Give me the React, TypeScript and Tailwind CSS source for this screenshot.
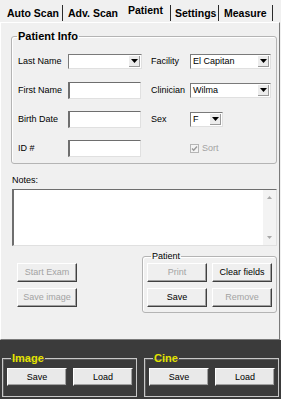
import React from 'react'

const tabs = [
  { label: 'Auto Scan', w: 'w-[61px]', pl: 'pl-[5px]', sep: true },
  { label: 'Adv. Scan', w: 'w-[59px]', pl: 'pl-[5px]', sep: false },
  { label: 'Patient', w: 'w-[49px]', pl: 'pl-[6px]', sep: true, active: true },
  { label: 'Settings', w: 'w-[48px]', pl: 'pl-[4px]', sep: true },
  { label: 'Measure', w: 'w-[54px]', pl: 'pl-[5px]', sep: true },
]

function Arrow() {
  return (
    <svg width="7" height="4" viewBox="0 0 7 4">
      <path d="M0 0h7L3.5 4z" fill="#000" />
    </svg>
  )
}

function Combo({ value, w }: { value?: string; w: string }) {
  return (
    <div className={`${w} h-[15px] flex bg-white border border-t-[#7a7a7a] border-l-[#7a7a7a] border-r-[#e0e0e0] border-b-[#e0e0e0]`}>
      <span className="flex-1 pl-[2px] text-[9px] leading-[13px] text-black">{value}</span>
      <span className="w-[11px] my-[1px] mr-[1px] bg-[#ececec] border-r border-b border-[#9a9a9a] flex items-center justify-center">
        <Arrow />
      </span>
    </div>
  )
}

function TextBox() {
  return (
    <div className="w-[73px] h-[17px] bg-white border border-t-[#6e6e6e] border-l-[#6e6e6e] border-l-2 border-r-[#e0e0e0] border-b-[#e0e0e0]" />
  )
}

function Btn({ label, disabled, dark }: { label: string; disabled?: boolean; dark?: boolean }) {
  return (
    <div
      className={`w-[60px] ${dark ? 'h-[18px] bg-[#e9e9e9]' : 'h-[19px] bg-[#efefef]'} flex items-center justify-center border border-t-white border-l-white border-r-[#404040] border-b-[#404040] shadow-[inset_-1px_-1px_0_#a0a0a0] text-[9px] leading-none ${disabled ? 'text-[#a3a3a3]' : 'text-black'}`}
    >
      {label}
    </div>
  )
}

export default function App() {
  return (
    <div className="w-[281px] h-[399px] bg-[#f0f0f0] flex flex-col font-['Liberation_Sans',Arial,sans-serif] text-black overflow-hidden">
      {/* Tabs */}
      <div className="h-[22px] flex pl-[2px]">
        {tabs.map((t) => (
          <div
            key={t.label}
            className={`${t.w} ${t.pl} shrink-0 h-[22px] text-[10.5px] font-bold whitespace-nowrap flex ${t.active ? 'pt-[4px]' : 'pt-[7px]'}`}
          >
            <span className="leading-[13px] flex-1">{t.label}</span>
            <span className={`w-px h-[16px] ${t.sep ? 'bg-[#2a2a2a]' : ''} ${t.active ? 'mt-[1px]' : 'mt-[-2px]'}`} />
          </div>
        ))}
      </div>

      {/* Main panel */}
      <div className="w-[280px] h-[318px] border border-t-white border-l-white border-r-[#7a7a7a] border-b-[#7a7a7a] pl-[10px]">
        <fieldset className="mt-[7px] w-[266px] border border-[#b4b4b4] rounded-[3px] shadow-[inset_1px_1px_0_#fff]">
          <legend className="ml-[5px] px-[1px] text-[11px] font-bold leading-[12px]">Patient Info</legend>
          <div className="pt-[5px] pl-[6px] grid grid-cols-[50px_83px_39px_81px] auto-rows-[29px] items-center text-[9px]">
            <span>Last Name</span>
            <Combo w="w-[74px]" />
            <span>Facility</span>
            <Combo w="w-[81px]" value="El Capitan" />

            <span>First Name</span>
            <TextBox />
            <span>Clinician</span>
            <Combo w="w-[81px]" value="Wilma" />

            <span>Birth Date</span>
            <TextBox />
            <span>Sex</span>
            <Combo w="w-[33px]" value="F" />

            <span>ID #</span>
            <TextBox />
            <span />
            <div className="flex items-center gap-[3px] text-[#a3a3a3]">
              <span className="w-[9px] h-[9px] border border-[#b5b5b5] bg-[#f4f4f4] flex items-center justify-center">
                <svg width="7" height="7" viewBox="0 0 7 7">
                  <path d="M1 3.5l1.7 1.8L6 1.5" stroke="#9a9a9a" strokeWidth="1.4" fill="none" />
                </svg>
              </span>
              <span>Sort</span>
            </div>
          </div>
        </fieldset>

        <div className="mt-[11px] pl-[1px] text-[9px] leading-[11px]">Notes:</div>
        <div className="mt-[3px] ml-[1px] w-[265px] h-[57px] flex bg-white border border-t-[#6e6e6e] border-l-[#6e6e6e] border-l-2 border-r-[#e0e0e0] border-b-[#e0e0e0]">
          <div className="flex-1" />
          <div className="w-[13px] bg-[#f3f3f3] flex flex-col items-center justify-between py-[6px]">
            <svg width="5" height="3" viewBox="0 0 5 3"><path d="M0 3h5L2.5 0z" fill="#a8a8a8" /></svg>
            <svg width="5" height="3" viewBox="0 0 5 3"><path d="M0 0h5L2.5 3z" fill="#a8a8a8" /></svg>
          </div>
        </div>

        <div className="mt-[5px] flex">
          <div className="pl-[6px] pt-[12px] flex flex-col gap-[6px]">
            <Btn label="Start Exam" disabled />
            <Btn label="Save image" disabled />
          </div>
          <fieldset className="ml-[65px] w-[135px] border border-[#b4b4b4] rounded-[3px] shadow-[inset_1px_1px_0_#fff] pl-[4px] pb-[5px]">
            <legend className="ml-[4px] px-[1px] text-[9px] leading-[11px]">Patient</legend>
            <div className="pt-[1px] grid grid-cols-[60px_60px] gap-x-[5px] gap-y-[6px]">
              <Btn label="Print" disabled />
              <Btn label="Clear fields" />
              <Btn label="Save" />
              <Btn label="Remove" disabled />
            </div>
          </fieldset>
        </div>
      </div>

      {/* Dark footer */}
      <div className="flex-1 bg-[#3b3b3b] flex gap-[7px] pl-[2px] pt-[12px]">
        {['Image', 'Cine'].map((g) => (
          <fieldset key={g} className="w-[135px] h-[45px] border border-[#c8c8c8] shadow-[inset_1px_1px_0_#5a5a5a] pl-[4px]">
            <legend className="ml-[4px] px-[1px] text-[11px] font-bold leading-[12px] text-[#e4e400]">{g}</legend>
            <div className="pt-[4px] flex gap-[6px]">
              <Btn label="Save" dark />
              <Btn label="Load" dark />
            </div>
          </fieldset>
        ))}
      </div>
    </div>
  )
}
